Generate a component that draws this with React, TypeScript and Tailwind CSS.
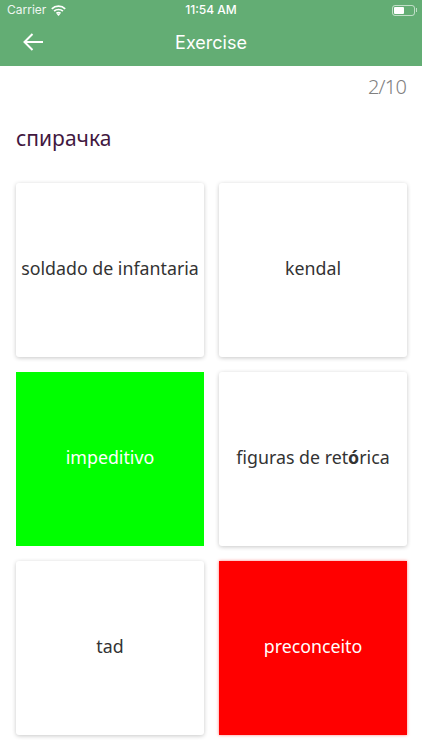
const answers = [
  { label: "soldado de infantaria", tone: "plain" },
  { label: "kendal", tone: "plain" },
  { label: "impeditivo", tone: "right" },
  { label: "figuras de ret|ó|rica", tone: "plain" },
  { label: "tad", tone: "plain" },
  { label: "preconceito", tone: "wrong" },
];

function WifiIcon() {
  return (
    <svg width="15" height="11" viewBox="0 0 15 11" fill="none" stroke="white" strokeWidth="1.7">
      <path d="M0.8 3.9C4.5 0.3 10.5 0.3 14.2 3.9" />
      <path d="M3.1 6.2C5.5 3.9 9.5 3.9 11.9 6.2" />
      <path d="M5.4 8.4C6.6 7.4 8.4 7.4 9.6 8.4" />
      <path d="M7.5 11L5.9 9.3C6.8 8.5 8.2 8.5 9.1 9.3Z" fill="white" stroke="none" />
    </svg>
  );
}

function BackArrow() {
  return (
    <svg width="20" height="18" viewBox="0 0 20 18" fill="none" stroke="white" strokeWidth="2">
      <path d="M20 9H1.5" />
      <path d="M9.5 1L1.5 9L9.5 17" />
    </svg>
  );
}

function Battery() {
  return (
    <div className="flex items-center">
      <div className="flex h-[11px] w-[23px] items-center rounded-[3px] border border-white/60 p-[1px]">
        <div className="h-full w-[10px] rounded-[1px] bg-white" />
      </div>
      <div className="ml-[1px] h-[4px] w-[1px] bg-white/60" />
    </div>
  );
}

// the accented letter falls back to a heavier face in the app
function CardLabel({ label }: { label: string }) {
  const parts = label.split("|");
  if (parts.length === 1) return <span>{label}</span>;
  return (
    <span>
      {parts[0]}
      <span className="font-bold">{parts[1]}</span>
      {parts[2]}
    </span>
  );
}

function AnswerCard({ label, tone }: { label: string; tone: string }) {
  if (tone === "right") {
    return (
      <div className="flex h-[174px] items-center justify-center bg-[#00ff00] pb-[3px] text-[17.8px] text-white">
        <CardLabel label={label} />
      </div>
    );
  }
  if (tone === "wrong") {
    return (
      <div className="flex h-[174px] items-center justify-center bg-[#ff0000] pb-[3px] text-[17.8px] text-white shadow-[0_0_3px_rgba(255,0,0,0.5)]">
        <CardLabel label={label} />
      </div>
    );
  }
  return (
    <div className="flex h-[174px] items-center justify-center rounded-[3px] bg-white pb-[3px] text-[17.8px] text-[#333333] shadow-[0_1px_4px_rgba(0,0,0,0.22)]">
      <CardLabel label={label} />
    </div>
  );
}

export default function App() {
  return (
    <div className="h-[750px] w-[422px] overflow-hidden bg-white font-['Noto_Sans',sans-serif]">
      <header className="h-[66px] bg-[#63ad74] text-white">
        <div className="relative flex h-[20px] items-center justify-between pl-[7px] pr-[5px] font-['Inter',sans-serif] text-[12px]">
          <div className="flex items-center gap-[5px]">
            <span className="opacity-90">Carrier</span>
            <WifiIcon />
          </div>
          <span className="absolute left-0 right-0 text-center font-medium">11:54 AM</span>
          <Battery />
        </div>
        <div className="relative flex h-[46px] items-center justify-center pb-[1px]">
          <div className="absolute left-[23px] top-[13px]">
            <BackArrow />
          </div>
          <span className="font-['Inter',sans-serif] text-[18px]">Exercise</span>
        </div>
      </header>
      <div className="px-[16px] pt-[7px] text-right text-[20px] font-light leading-[28px] tracking-[-0.8px] text-[#808080]">2/10</div>
      <h1 className="mt-[22px] px-[16px] text-[21px] leading-[30px] text-[#42183f]">спирачка</h1>
      <div className="mx-[16px] mt-[30px] grid w-[391px] grid-cols-[188px_188px] gap-[15px]">
        {answers.map((a) => (
          <AnswerCard key={a.label} label={a.label} tone={a.tone} />
        ))}
      </div>
    </div>
  );
}
